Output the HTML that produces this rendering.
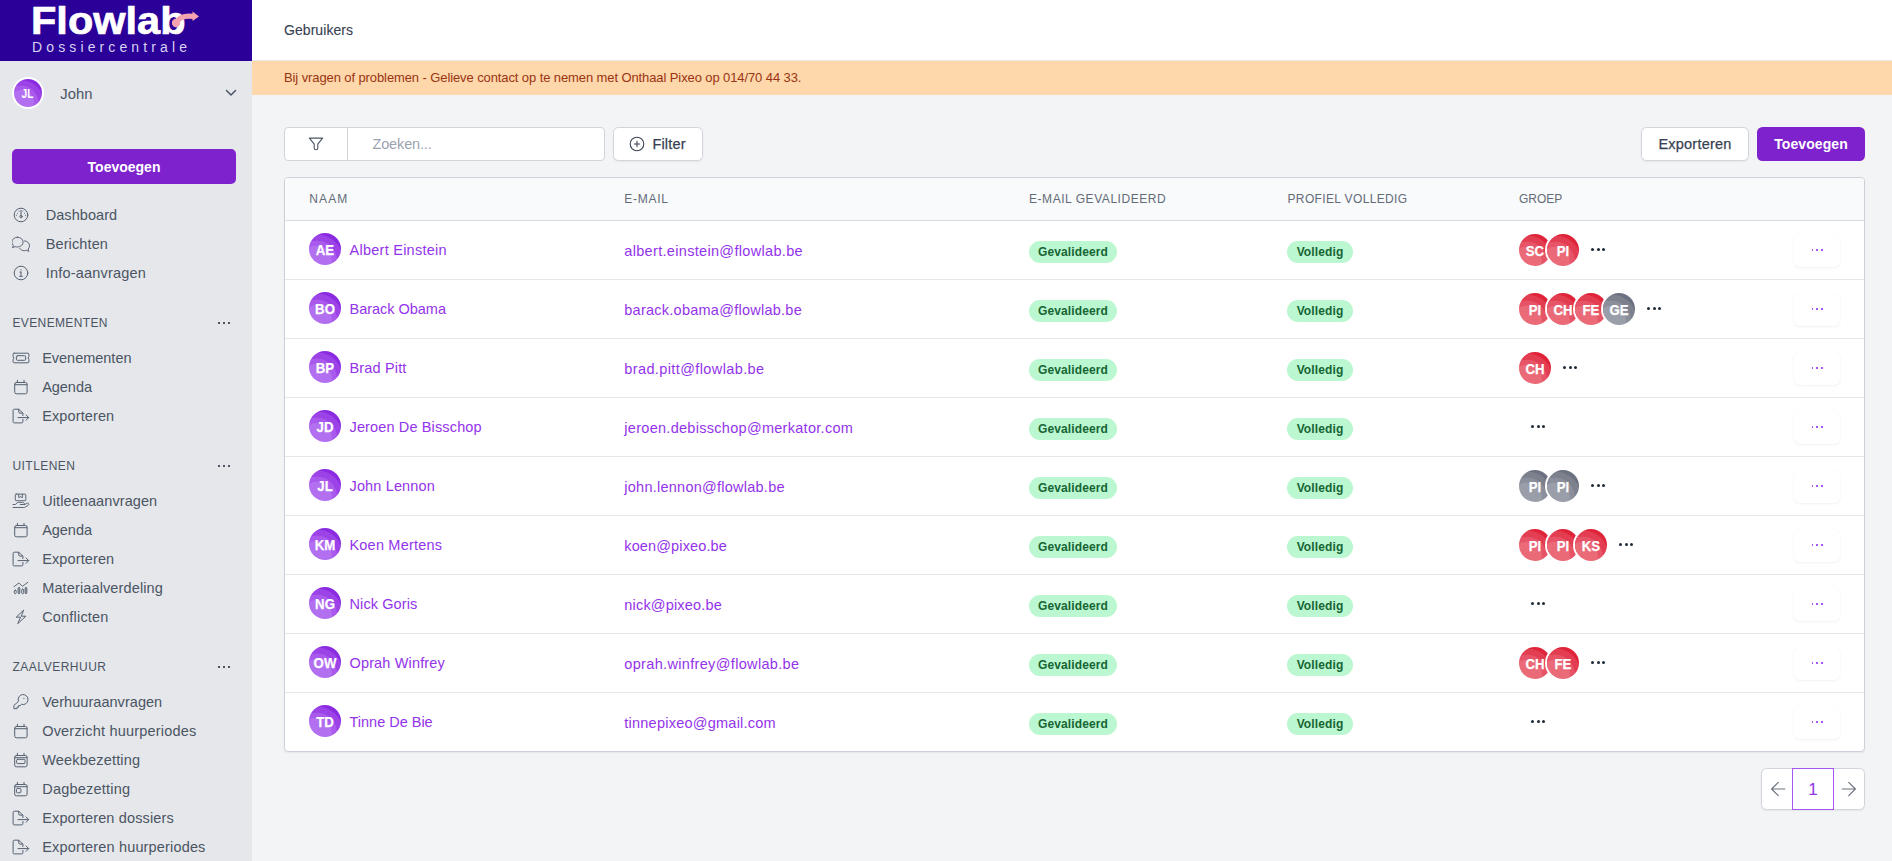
<!DOCTYPE html>
<html lang="nl"><head><meta charset="utf-8"><title>Gebruikers</title>
<style>
*{box-sizing:border-box;margin:0;padding:0}
html,body{width:1892px;height:861px;overflow:hidden;background:#f3f4f6;font-family:"Liberation Sans", sans-serif;font-size:15px;color:#4b5563}
#side{position:absolute;left:0;top:0;width:252px;height:861px;background:#e5e7eb}
#logo{position:absolute;left:0;top:0;width:252px;height:61px;background:#2a0099}
#logo .fl{position:absolute;left:31px;top:.500px;font-size:38.500px;font-weight:700;color:#fff;line-height:40px;transform:scaleX(1.078);transform-origin:0 0;-webkit-text-stroke:.7px #fff}
#logo .dc{position:absolute;left:32px;top:38.100px;font-size:14px;color:#d9d2f0;letter-spacing:4.124px;line-height:18px}
#user .ring{position:absolute;left:12px;top:77px;width:32px;height:32px;border-radius:50%;background:#fff}
#user .av{position:absolute;left:14px;top:79px;width:28px;height:28px}
#user .av{background:radial-gradient(circle at 25% 86%,#b26ff0 0,#b26ff0 12.6px,#a95aec 13.3px,#a95aec 17.1px,#9b43e7 17.8px,#9b43e7 22.4px,#8a2be2 23.1px,#8a2be2 100%)}
#user .av b{font-size:12px;transform:scaleX(.85)}
#user .un{position:absolute;left:60.300px;top:84px;font-size:14.800px;line-height:20px;color:#4b5563}
#user svg{position:absolute;left:225px;top:88.800px}
.btn-p{background:#7e22ce;color:#fff;font-weight:700;font-size:14px;border-radius:5px;text-align:center}
#sadd{position:absolute;left:12px;top:149px;width:224px;height:35px;line-height:37px}
.nav{position:absolute;left:0;width:252px;height:20px;line-height:20px;color:#4b5563}
.nav .ic{position:absolute;left:12px;top:1px;width:18px;height:18px;color:#566171}
.nav .lb{position:absolute;top:0;font-size:14.500px;white-space:nowrap}
.sect{position:absolute;left:12.500px;width:224px;height:16px;line-height:16px;font-size:12px;color:#4b5563;white-space:nowrap}
.dots3{position:absolute;left:205.500px;top:7px;width:14px;height:2px}
.dots3 i{position:absolute;top:0;width:2px;height:2px;background:#4b5563}
.dots3 i:nth-child(1){left:0}.dots3 i:nth-child(2){left:5px}.dots3 i:nth-child(3){left:10px}
#top{position:absolute;left:252px;top:0;width:1640px;height:61px;background:#fff}
#top{border-bottom:1px solid #e5e7eb}
#top span{position:absolute;left:32px;top:20px;font-size:14px;line-height:20px;color:#374151;letter-spacing:.06px;-webkit-text-stroke:.1px #374151}
#ban{position:absolute;left:252px;top:61px;width:1640px;height:34px;background:#fed7aa;color:#9a3412;font-size:13px;line-height:34px;padding-left:32px;letter-spacing:-0.1px;white-space:nowrap}
#search{position:absolute;left:284px;top:127px;width:321px;height:34px;background:#fff;border:1px solid #d1d5db;border-radius:4px}
#search .sep{position:absolute;left:62px;top:0;width:1px;height:32px;background:#d1d5db}
#search svg{position:absolute;left:23px;top:8.200px;color:#4b5563}
#search .ph{position:absolute;left:87.500px;top:6px;font-size:14.500px;line-height:20px;color:#9ca3af;letter-spacing:-.15px}
#filter{position:absolute;left:613px;top:127px;width:90px;height:34px;background:#fff;border:1px solid #d1d5db;border-radius:5.500px;box-shadow:0 1px 2px rgba(0,0,0,.05)}
#filter svg{position:absolute;left:15px;top:8px;color:#374151}
#filter span{position:absolute;left:38.400px;top:6px;font-size:14.500px;line-height:20px;color:#374151;letter-spacing:.2px;-webkit-text-stroke:.25px #374151}
#exp{position:absolute;left:1641px;top:127px;width:108px;height:34px;background:#fff;border:1px solid #d1d5db;border-radius:5.500px;box-shadow:0 1px 2px rgba(0,0,0,.05);text-align:center;line-height:32px;font-size:14.500px;color:#374151;letter-spacing:.22px;-webkit-text-stroke:.25px #374151}
#add{position:absolute;left:1757px;top:127px;width:108px;height:34px;line-height:34px;font-size:14px;letter-spacing:.08px;border-radius:5.500px}
#tbl{position:absolute;left:284px;top:177px;width:1581px;height:575px;background:#fff;border:1px solid #cdd1d9;border-radius:4px;box-shadow:0 1px 2px rgba(0,0,0,.06);overflow:hidden}
#th{position:absolute;left:0;top:0;width:1579px;height:43px;background:#f9fafb;border-bottom:1px solid #d9dce1}
#th span{position:absolute;top:13px;font-size:12px;line-height:16px;color:#636b78;white-space:nowrap}
.row{position:absolute;left:0;width:1579px;height:59px;border-bottom:1px solid #e5e7eb}
.av{display:block;border-radius:50%;overflow:hidden;text-align:center;color:#fff}
.av b{display:block;font-weight:700}
.av-p{background:radial-gradient(circle at 25% 86%,#b26ff0 0,#b26ff0 14.4px,#a95aec 15.1px,#a95aec 19.5px,#9b43e7 20.2px,#9b43e7 25.6px,#8a2be2 26.3px,#8a2be2 100%)}
.uav{position:absolute;left:24px;top:12px;width:32px;height:32px}
.uav b{font-size:15.200px;line-height:34.700px;transform:scaleX(.87);-webkit-text-stroke:.25px #fff}
.nm{position:absolute;left:64.500px;top:19px;font-size:14.500px;line-height:20px;color:#9333ea;white-space:nowrap}
.em{position:absolute;left:339.300px;top:20px;font-size:14.500px;line-height:20px;color:#9333ea;white-space:nowrap}
.bdg{position:absolute;top:20px;height:22px;border-radius:11px;background:#bbf7d0;color:#166534;font-size:12px;font-weight:700;line-height:23px;text-align:center;letter-spacing:.12px}
.b1{left:744px;width:88px}
.b2{left:1002px;width:66px}
.grp{position:absolute;left:1234px;top:13px;height:32px;display:flex;align-items:center}
.gav{display:block;width:32px;height:32px;border-radius:50%;box-shadow:0 0 0 2px #fff;margin-left:-4px;text-align:center;color:#fff;position:relative}
.gav:first-child{margin-left:0}
.gav b{display:block;font-size:15.200px;line-height:34.700px;font-weight:700;transform:scaleX(.87);-webkit-text-stroke:.25px #fff}
.av-r{background:radial-gradient(circle at 25% 86%,#ea6a78 0,#ea6a78 14.4px,#e75467 15.1px,#e75467 19.5px,#e33d52 20.2px,#e33d52 25.6px,#df2339 26.3px,#df2339 100%)}
.av-g{background:radial-gradient(circle at 25% 86%,#9a9ea9 0,#9a9ea9 14.4px,#8b8f9b 15.1px,#8b8f9b 19.5px,#7d818e 20.2px,#7d818e 25.6px,#6c7181 26.3px,#6c7181 100%)}
.gd{position:relative;display:block;width:39px;height:20px}
.grp .gav + .gd{margin-left:0}
.gd i{position:absolute;top:8.200px;width:3.200px;height:3.200px;border-radius:50%;background:#1f2937}
.gd i:nth-child(1){left:12.300px}.gd i:nth-child(2){left:17.800px}.gd i:nth-child(3){left:23.300px}
.act{position:absolute;left:1509px;top:13px;width:46px;height:33px;border-radius:6px;background:#fff;box-shadow:0 1px 3px rgba(0,0,0,.055),0 0 1px rgba(0,0,0,.04)}
.act i{position:absolute;top:15.200px;width:1.700px;height:1.700px;background:#a855f7}
.act i:nth-child(1){left:17.600px}.act i:nth-child(2){left:22.300px}.act i:nth-child(3){left:27px}
#pg{position:absolute;left:1761px;top:768px;width:104px;height:42px;background:#fff;border:1px solid #d1d5db;border-radius:5.500px;box-shadow:0 1px 2px rgba(0,0,0,.06)}
#pg .cur{position:absolute;left:30px;top:-1px;width:42px;height:42px;border:1px solid #a855f7;color:#9333ea;font-size:17px;line-height:41px;text-align:center}
#pg svg{position:absolute;top:11px;color:#6b7280}
</style></head><body>
<div id="side">
<div id="logo"><span class="fl">Flowlab</span><span class="dc">Dossiercentrale</span>
<svg style="position:absolute;left:168px;top:8px" width="34" height="22" viewBox="0 0 34 22"><path d="M8 14.800C11 9.500 17 7.400 25 8.400" stroke="#f4a3b0" stroke-width="5.200" fill="none" stroke-linecap="round"/><circle cx="8" cy="15" r="4.200" fill="#f4a3b0"/><path d="M24.500 3.400l6.500 5-6.500 4.600z" fill="#f4a3b0"/></svg>
</div>
<div id="user"><span class="ring"></span><span class="av av-p"><b style="line-height:31px;margin-left:-1px">JL</b></span><span class="un">John</span>
<svg width="12" height="8" viewBox="0 0 12 8" fill="none" stroke="#4b5563" stroke-width="1.500" stroke-linecap="round" stroke-linejoin="round"><path d="M1.500 1.500L6 6l4.500-4.500"/></svg></div>
<div id="sadd" class="btn-p">Toevoegen</div>
<div class="nav" style="top:205px"><span class="ic"><svg width="18" height="18" viewBox="0 0 18 18" fill="none" stroke="currentColor" stroke-width="1.0" stroke-linecap="round" stroke-linejoin="round"><circle cx="9" cy="9" r="6.800"/><path d="M9 4.400v5"/><circle cx="9" cy="10.600" r="1.150"/><path d="M5.300 7.200l.3.200M12.700 7.200l-.3.200M4.300 9.400h.3M13.400 9.400h.3M7 4.900l.1.300M11 4.900l-.1.300" stroke-width=".8"/></svg></span><span class="lb" style="left:45.7px;letter-spacing:0.058px">Dashboard</span></div><div class="nav" style="top:234px"><span class="ic"><svg width="18" height="18" viewBox="0 0 18 18" fill="none" stroke="currentColor" stroke-width="0.95" stroke-linecap="round" stroke-linejoin="round"><path d="M5.500 2.200c3.100 0 5.600 2.100 5.600 4.900s-2.500 4.900-5.600 4.900c-.8 0-1.600-.1-2.300-.4L.4 12.700l.9-2.300C.4 9.500-.1 8.400-.1 7.100c0-2.800 2.500-4.900 5.600-4.900z"/><path d="M12.500 5.900c2.800.1 5 2.200 5 4.900 0 1.300-.5 2.400-1.400 3.300l.8 2.200-2.700-1c-.6.200-1.300.4-2 .4-1.900 0-3.600-.9-4.500-2.300"/></svg></span><span class="lb" style="left:45.7px;letter-spacing:0.117px">Berichten</span></div><div class="nav" style="top:263px"><span class="ic"><svg width="18" height="18" viewBox="0 0 18 18" fill="none" stroke="currentColor" stroke-width="1.0" stroke-linecap="round" stroke-linejoin="round"><circle cx="9" cy="9" r="6.800"/><path d="M9 8.100v4.100M7.900 8.100H9M7.600 12.300h2.800"/><circle cx="9" cy="5.800" r=".65" fill="currentColor" stroke="none"/></svg></span><span class="lb" style="left:45.7px;letter-spacing:0.204px">Info-aanvragen</span></div><div class="sect" style="top:315px"><span style="letter-spacing:0.364px">EVENEMENTEN</span><span class="dots3"><i></i><i></i><i></i></span></div><div class="nav" style="top:348px"><span class="ic"><svg width="18" height="18" viewBox="0 0 18 18" fill="none" stroke="currentColor" stroke-width="1.0" stroke-linecap="round" stroke-linejoin="round"><path d="M2.100 4.200h13.800a1 1 0 0 1 1 1v2.500l-.9 1.300.9 1.300v2.500a1 1 0 0 1-1 1H2.100a1 1 0 0 1-1-1v-2.500l.9-1.300-.9-1.300V5.200a1 1 0 0 1 1-1z"/><rect x="4.400" y="6.700" width="9.200" height="4.600" rx="1"/></svg></span><span class="lb" style="left:42.2px;letter-spacing:-0.018px">Evenementen</span></div><div class="nav" style="top:377px"><span class="ic"><svg width="18" height="18" viewBox="0 0 18 18" fill="none" stroke="currentColor" stroke-width="1.0" stroke-linecap="round" stroke-linejoin="round"><rect x="2.700" y="4.500" width="12.400" height="11.300" rx="1.600"/><path d="M2.900 6.700h12M5.400 2.300v2.200M12 2.300v2.200"/></svg></span><span class="lb" style="left:42.2px;letter-spacing:-0.04px">Agenda</span></div><div class="nav" style="top:406px"><span class="ic"><svg width="18" height="18" viewBox="0 0 18 18" fill="none" stroke="currentColor" stroke-width="1.0" stroke-linecap="round" stroke-linejoin="round"><path d="M10.900 8.600V6.100L6.700 2.200H2.300a1.200 1.200 0 0 0-1.200 1.200v11.300a1.200 1.200 0 0 0 1.200 1.200h7.400a1.200 1.200 0 0 0 1.200-1.200v-2.300"/><path d="M6.700 2.400v2.500a1.200 1.200 0 0 0 1.200 1.200h2.800"/><path d="M6 10.600h10.500M14.100 7.900l2.600 2.700-2.600 2.700"/></svg></span><span class="lb" style="left:42.2px;letter-spacing:0.118px">Exporteren</span></div><div class="sect" style="top:458px"><span style="letter-spacing:0.437px">UITLENEN</span><span class="dots3"><i></i><i></i><i></i></span></div><div class="nav" style="top:491px"><span class="ic"><svg width="18" height="18" viewBox="0 0 18 18" fill="none" stroke="currentColor" stroke-width="0.95" stroke-linecap="round" stroke-linejoin="round"><rect x="3.300" y="2.100" width="10.500" height="6.600" rx=".9"/><path d="M6.700 2.300v3.300l1.850-.9 1.850.9V2.300"/><path d="M1 12.500h2.300l1.900-1.700c.3-.3.700-.4 1.100-.4h4.300c.8 0 1.500.5 1.800 1.100l.5 1H8.200"/><path d="M12.900 12.500l1.600-1.100c.7-.5 1.700-.4 2.100.2.400.6.100 1.400-.6 1.800l-2.600 1.600c-.5.300-1.100.5-1.700.5H1"/></svg></span><span class="lb" style="left:42.2px;letter-spacing:0.089px">Uitleenaanvragen</span></div><div class="nav" style="top:520px"><span class="ic"><svg width="18" height="18" viewBox="0 0 18 18" fill="none" stroke="currentColor" stroke-width="1.0" stroke-linecap="round" stroke-linejoin="round"><rect x="2.700" y="4.500" width="12.400" height="11.300" rx="1.600"/><path d="M2.900 6.700h12M5.400 2.300v2.200M12 2.300v2.200"/></svg></span><span class="lb" style="left:42.2px;letter-spacing:-0.04px">Agenda</span></div><div class="nav" style="top:549px"><span class="ic"><svg width="18" height="18" viewBox="0 0 18 18" fill="none" stroke="currentColor" stroke-width="1.0" stroke-linecap="round" stroke-linejoin="round"><path d="M10.900 8.600V6.100L6.700 2.200H2.300a1.200 1.200 0 0 0-1.200 1.200v11.300a1.200 1.200 0 0 0 1.200 1.200h7.400a1.200 1.200 0 0 0 1.200-1.200v-2.300"/><path d="M6.700 2.400v2.500a1.200 1.200 0 0 0 1.200 1.200h2.800"/><path d="M6 10.600h10.500M14.100 7.900l2.600 2.700-2.600 2.700"/></svg></span><span class="lb" style="left:42.2px;letter-spacing:0.118px">Exporteren</span></div><div class="nav" style="top:578px"><span class="ic"><svg width="18" height="18" viewBox="0 0 18 18" fill="none" stroke="currentColor" stroke-width="0.95" stroke-linecap="round" stroke-linejoin="round"><path d="M2 7.700l5-3.800 3.400 3.500 5.400-4.100"/><rect x="2.300" y="11" width="1.900" height="3.700" rx=".95"/><rect x="6.100" y="8.500" width="1.700" height="6.200" rx=".85" fill="currentColor" fill-opacity=".45"/><rect x="9.700" y="10.100" width="1.900" height="4.600" rx=".95"/><rect x="13.100" y="8.500" width="1.700" height="6.200" rx=".85" fill="currentColor" fill-opacity=".45"/></svg></span><span class="lb" style="left:42.2px;letter-spacing:0.13px">Materiaalverdeling</span></div><div class="nav" style="top:607px"><span class="ic"><svg width="18" height="18" viewBox="0 0 18 18" fill="none" stroke="currentColor" stroke-width="1.0" stroke-linecap="round" stroke-linejoin="round"><path d="M11.400 2.400L4.200 9.200h4.400l-2.900 6.500 8.200-7.500H9.600z"/></svg></span><span class="lb" style="left:42.2px;letter-spacing:0.191px">Conflicten</span></div><div class="sect" style="top:659px"><span style="letter-spacing:0.503px">ZAALVERHUUR</span><span class="dots3"><i></i><i></i><i></i></span></div><div class="nav" style="top:692px"><span class="ic"><svg width="18" height="18" viewBox="0 0 18 18" fill="none" stroke="currentColor" stroke-width="1.0" stroke-linecap="round" stroke-linejoin="round"><path d="M6.300 8.100a5 5 0 1 1 3.200 3.200l-1.300 1.300H6.600v1.600H5v1.500H1.900v-2.900z"/><circle cx="11.900" cy="5.300" r=".6" fill="currentColor" stroke="none"/></svg></span><span class="lb" style="left:42.2px;letter-spacing:0.045px">Verhuuraanvragen</span></div><div class="nav" style="top:721px"><span class="ic"><svg width="18" height="18" viewBox="0 0 18 18" fill="none" stroke="currentColor" stroke-width="1.0" stroke-linecap="round" stroke-linejoin="round"><rect x="2.700" y="4.500" width="12.400" height="11.300" rx="1.600"/><path d="M2.900 6.700h12M5.400 2.300v2.200M12 2.300v2.200"/></svg></span><span class="lb" style="left:42.2px;letter-spacing:0.194px">Overzicht huurperiodes</span></div><div class="nav" style="top:750px"><span class="ic"><svg width="18" height="18" viewBox="0 0 18 18" fill="none" stroke="currentColor" stroke-width="1.0" stroke-linecap="round" stroke-linejoin="round"><rect x="2.700" y="4.500" width="12.400" height="11.300" rx="1.600"/><path d="M2.900 6.700h12M5.400 2.300v2.200M12 2.300v2.200"/><rect x="4.600" y="8.300" width="8.400" height="4.300" rx="1"/></svg></span><span class="lb" style="left:42.2px;letter-spacing:0.187px">Weekbezetting</span></div><div class="nav" style="top:779px"><span class="ic"><svg width="18" height="18" viewBox="0 0 18 18" fill="none" stroke="currentColor" stroke-width="1.0" stroke-linecap="round" stroke-linejoin="round"><rect x="2.700" y="4.500" width="12.400" height="11.300" rx="1.600"/><path d="M2.900 6.700h12M5.400 2.300v2.200M12 2.300v2.200"/><rect x="4.500" y="8.400" width="4.400" height="4.400" rx="1"/></svg></span><span class="lb" style="left:42.2px;letter-spacing:0.222px">Dagbezetting</span></div><div class="nav" style="top:808px"><span class="ic"><svg width="18" height="18" viewBox="0 0 18 18" fill="none" stroke="currentColor" stroke-width="1.0" stroke-linecap="round" stroke-linejoin="round"><path d="M10.900 8.600V6.100L6.700 2.200H2.300a1.200 1.200 0 0 0-1.200 1.200v11.300a1.200 1.200 0 0 0 1.200 1.200h7.400a1.200 1.200 0 0 0 1.200-1.200v-2.300"/><path d="M6.700 2.400v2.500a1.200 1.200 0 0 0 1.200 1.200h2.800"/><path d="M6 10.600h10.500M14.100 7.900l2.600 2.700-2.600 2.700"/></svg></span><span class="lb" style="left:42.2px;letter-spacing:0.147px">Exporteren dossiers</span></div><div class="nav" style="top:837px"><span class="ic"><svg width="18" height="18" viewBox="0 0 18 18" fill="none" stroke="currentColor" stroke-width="1.0" stroke-linecap="round" stroke-linejoin="round"><path d="M10.900 8.600V6.100L6.700 2.200H2.300a1.200 1.200 0 0 0-1.200 1.200v11.300a1.200 1.200 0 0 0 1.200 1.200h7.400a1.200 1.200 0 0 0 1.200-1.200v-2.300"/><path d="M6.700 2.400v2.500a1.200 1.200 0 0 0 1.200 1.200h2.800"/><path d="M6 10.600h10.500M14.100 7.900l2.600 2.700-2.600 2.700"/></svg></span><span class="lb" style="left:42.2px;letter-spacing:0.163px">Exporteren huurperiodes</span></div>
</div>
<div id="top"><span>Gebruikers</span></div>
<div id="ban">Bij vragen of problemen - Gelieve contact op te nemen met Onthaal Pixeo op 014/70 44 33.</div>
<div id="search"><svg width="16" height="16" viewBox="0 0 16 16" fill="none" stroke="currentColor" stroke-width="1.100" stroke-linejoin="round"><path d="M1.400 2.100h13.200L9.800 8.100v3.900a1.800 1.800 0 0 1-3.600 0V8.100z"/></svg><span class="sep"></span><span class="ph">Zoeken...</span></div>
<div id="filter"><svg width="16" height="16" viewBox="0 0 16 16" fill="none" stroke="currentColor" stroke-width="1.100" stroke-linecap="round"><circle cx="8" cy="8" r="6.800"/><path d="M8 5.400v5.200M5.400 8h5.200"/></svg><span>Filter</span></div>
<div id="exp">Exporteren</div>
<div id="add" class="btn-p">Toevoegen</div>
<div id="tbl">
<div id="th"><span style="left:24.3px;letter-spacing:1.109px">NAAM</span><span style="left:339.3px;letter-spacing:0.747px">E-MAIL</span><span style="left:744px;letter-spacing:0.549px">E-MAIL GEVALIDEERD</span><span style="left:1002.5px;letter-spacing:0.356px">PROFIEL VOLLEDIG</span><span style="left:1234px;letter-spacing:-0.036px">GROEP</span></div>
<div style="position:absolute;left:0;top:0;width:1579px">
<div class="row" style="top:43px">
<span class="av av-p uav"><b>AE</b></span>
<span class="nm" style="letter-spacing:0.257px">Albert Einstein</span>
<span class="em" style="letter-spacing:0.32px">albert.einstein@flowlab.be</span>
<span class="bdg b1">Gevalideerd</span>
<span class="bdg b2">Volledig</span>
<span class="grp"><span class="gav av-r"><b>SC</b></span><span class="gav av-r"><b>PI</b></span><span class="gd"><i></i><i></i><i></i></span></span>
<span class="act"><i></i><i></i><i></i></span>
</div><div class="row" style="top:102px">
<span class="av av-p uav"><b>BO</b></span>
<span class="nm" style="letter-spacing:-0.02px">Barack Obama</span>
<span class="em" style="letter-spacing:0.25px">barack.obama@flowlab.be</span>
<span class="bdg b1">Gevalideerd</span>
<span class="bdg b2">Volledig</span>
<span class="grp"><span class="gav av-r"><b>PI</b></span><span class="gav av-r"><b>CH</b></span><span class="gav av-r"><b>FE</b></span><span class="gav av-g"><b>GE</b></span><span class="gd"><i></i><i></i><i></i></span></span>
<span class="act"><i></i><i></i><i></i></span>
</div><div class="row" style="top:161px">
<span class="av av-p uav"><b>BP</b></span>
<span class="nm" style="letter-spacing:0.161px">Brad Pitt</span>
<span class="em" style="letter-spacing:0.389px">brad.pitt@flowlab.be</span>
<span class="bdg b1">Gevalideerd</span>
<span class="bdg b2">Volledig</span>
<span class="grp"><span class="gav av-r"><b>CH</b></span><span class="gd"><i></i><i></i><i></i></span></span>
<span class="act"><i></i><i></i><i></i></span>
</div><div class="row" style="top:220px">
<span class="av av-p uav"><b>JD</b></span>
<span class="nm" style="letter-spacing:0.137px">Jeroen De Bisschop</span>
<span class="em" style="letter-spacing:0.288px">jeroen.debisschop@merkator.com</span>
<span class="bdg b1">Gevalideerd</span>
<span class="bdg b2">Volledig</span>
<span class="grp"><span class="gd"><i></i><i></i><i></i></span></span>
<span class="act"><i></i><i></i><i></i></span>
</div><div class="row" style="top:279px">
<span class="av av-p uav"><b>JL</b></span>
<span class="nm" style="letter-spacing:0.144px">John Lennon</span>
<span class="em" style="letter-spacing:0.248px">john.lennon@flowlab.be</span>
<span class="bdg b1">Gevalideerd</span>
<span class="bdg b2">Volledig</span>
<span class="grp"><span class="gav av-g"><b>PI</b></span><span class="gav av-g"><b>PI</b></span><span class="gd"><i></i><i></i><i></i></span></span>
<span class="act"><i></i><i></i><i></i></span>
</div><div class="row" style="top:338px">
<span class="av av-p uav"><b>KM</b></span>
<span class="nm" style="letter-spacing:0.193px">Koen Mertens</span>
<span class="em" style="letter-spacing:0.126px">koen@pixeo.be</span>
<span class="bdg b1">Gevalideerd</span>
<span class="bdg b2">Volledig</span>
<span class="grp"><span class="gav av-r"><b>PI</b></span><span class="gav av-r"><b>PI</b></span><span class="gav av-r"><b>KS</b></span><span class="gd"><i></i><i></i><i></i></span></span>
<span class="act"><i></i><i></i><i></i></span>
</div><div class="row" style="top:397px">
<span class="av av-p uav"><b>NG</b></span>
<span class="nm" style="letter-spacing:0.092px">Nick Goris</span>
<span class="em" style="letter-spacing:0.181px">nick@pixeo.be</span>
<span class="bdg b1">Gevalideerd</span>
<span class="bdg b2">Volledig</span>
<span class="grp"><span class="gd"><i></i><i></i><i></i></span></span>
<span class="act"><i></i><i></i><i></i></span>
</div><div class="row" style="top:456px">
<span class="av av-p uav"><b>OW</b></span>
<span class="nm" style="letter-spacing:0.151px">Oprah Winfrey</span>
<span class="em" style="letter-spacing:0.336px">oprah.winfrey@flowlab.be</span>
<span class="bdg b1">Gevalideerd</span>
<span class="bdg b2">Volledig</span>
<span class="grp"><span class="gav av-r"><b>CH</b></span><span class="gav av-r"><b>FE</b></span><span class="gd"><i></i><i></i><i></i></span></span>
<span class="act"><i></i><i></i><i></i></span>
</div><div class="row" style="top:515px">
<span class="av av-p uav"><b>TD</b></span>
<span class="nm" style="letter-spacing:-0.009px">Tinne De Bie</span>
<span class="em" style="letter-spacing:0.237px">tinnepixeo@gmail.com</span>
<span class="bdg b1">Gevalideerd</span>
<span class="bdg b2">Volledig</span>
<span class="grp"><span class="gd"><i></i><i></i><i></i></span></span>
<span class="act"><i></i><i></i><i></i></span>
</div>
</div>
</div>
<div id="pg">
<svg style="left:7px" width="18" height="18" viewBox="0 0 18 18" fill="none" stroke="currentColor" stroke-width="1.150" stroke-linecap="round" stroke-linejoin="round"><path d="M15.800 9H2.600M9.300 2.300L2.600 9l6.700 6.700"/></svg>
<span class="cur">1</span>
<svg style="left:78px" width="18" height="18" viewBox="0 0 18 18" fill="none" stroke="currentColor" stroke-width="1.150" stroke-linecap="round" stroke-linejoin="round"><path d="M2.200 9h13.200M8.700 2.300L15.400 9l-6.700 6.700"/></svg>
</div>
</body></html>
